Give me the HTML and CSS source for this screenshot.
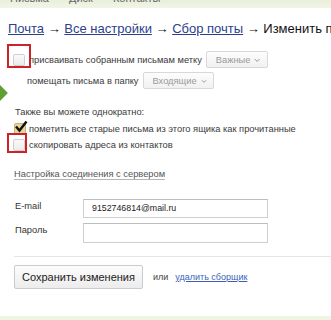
FILE: index.html
```html
<!DOCTYPE html>
<html lang="ru">
<head>
<meta charset="utf-8">
<link rel="stylesheet" href="styles.css">
</head>
<body>
<div class="page">
  <div class="topbar">
    <span>Письма</span><span>Диск</span><span>Контакты</span>
  </div>

  <div class="crumbs">
    <a href="#">Почта</a> → <a href="#">Все настройки</a> → <a href="#">Сбор почты</a> → Изменить параметры сборщика
  </div>

  <div class="opts">
    <div class="row row1">
      <span class="cb"></span>
      <span class="txt">присваивать собранным письмам метку</span>
      <span class="sel sel1">Важные <svg width="7" height="5" viewBox="0 0 7 5"><path d="M1 1 L3.5 3.5 L6 1" fill="none" stroke="#888" stroke-width="1"/></svg></span>
    </div>
    <div class="row row2">
      <span class="txt">помещать письма в папку</span>
      <span class="sel sel2">Входящие <svg width="7" height="5" viewBox="0 0 7 5"><path d="M1 1 L3.5 3.5 L6 1" fill="none" stroke="#888" stroke-width="1"/></svg></span>
    </div>

    <div class="note">Также вы можете однократно:</div>
    <div class="row row3">
      <span class="cb checked"><svg width="14" height="13" viewBox="0 0 14 13"><path d="M2 6.5 L5.5 10.5 L12.5 1.5" fill="none" stroke="#111" stroke-width="2.4"/></svg></span>
      <span class="txt">пометить все старые письма из этого ящика как прочитанные</span>
    </div>
    <div class="row row4">
      <span class="cb"></span>
      <span class="txt">скопировать адреса из контактов</span>
    </div>

    <div class="server"><span>Настройка соединения с сервером</span></div>

    <div class="form">
      <label class="lbl l1">E-mail</label>
      <div class="inp i1">9152746814@mail.ru</div>
      <label class="lbl l2">Пароль</label>
      <div class="inp i2"></div>
    </div>

    <div class="sep"></div>

    <div class="actions">
      <span class="btn">Сохранить изменения</span>
      <span class="or">или</span>
      <a class="del" href="#">удалить сборщик</a>
    </div>
  </div>

  <div class="bottombar"></div>

  <div class="arrow"></div>
  <div class="mark m1"></div>
  <div class="mark m2"></div>
</div>
</body>
</html>
```

FILE: styles.css
```css
html, body {
  margin: 0;
  padding: 0;
  background: #fff;
}
body {
  font-family: "Liberation Sans", Arial, sans-serif;
  color: #333;
  font-size: 9.3px;
  width: 331px;
  height: 320px;
  overflow: hidden;
}
.page {
  position: relative;
  width: 331px;
  height: 320px;
  overflow: hidden;
}
.topbar {
  height: 8px;
  background: linear-gradient(#e9efda, #f1f5e8);
  overflow: hidden;
  font-size: 11px;
  color: #666;
  line-height: 12px;
  display: flex;
  gap: 20px;
  padding-left: 10px;
}
.topbar span {
  margin-top: -8px;
}
.crumbs {
  margin-top: 13px;
  padding-left: 8px;
  font-size: 13px;
  line-height: 16px;
  height: 16px;
  white-space: nowrap;
  overflow: hidden;
  color: #111;
}
.crumbs a {
  color: #2d3f8c;
  text-decoration: underline;
}
.opts {
  padding-left: 13px;
}
.row {
  display: flex;
  align-items: center;
  white-space: nowrap;
}
.txt {
  color: #3a3a3a;
}
.row1 {
  margin-top: 13px;
  height: 19px;
}
.row1 .cb {
  margin-right: 4px;
}
.row2 {
  margin-top: 3px;
  height: 17px;
  padding-left: 14px;
}
.cb {
  width: 10px;
  height: 10px;
  border: 1px solid #cfcfcf;
  border-radius: 2px;
  background: linear-gradient(#fafafa, #ececec);
  flex: none;
  position: relative;
}
.cb.checked {
  background: #e8d49a;
  border-color: #c9b27a;
}
.cb.checked svg {
  position: absolute;
  left: -1px;
  top: -4px;
}
.sel {
  display: inline-flex;
  align-items: center;
  gap: 4px;
  height: 15px;
  padding: 0 6px 0 9px;
  border: 1px solid #d8d8d8;
  border-radius: 2px;
  background: linear-gradient(#fdfdfd, #f1f1f1);
  color: #9a9a9a;
  margin-left: 4px;
}
.sel svg {
  margin-top: 2px;
}
.sel1 {
  width: 45px;
}
.sel2 {
  width: 54px;
}
.note {
  margin-top: 16px;
  padding-left: 2px;
  height: 14px;
  line-height: 14px;
  color: #3a3a3a;
}
.row3 {
  margin-top: 3px;
  height: 14px;
  padding-left: 1px;
}
.row3 .cb {
  margin-right: 3px;
}
.row4 {
  margin-top: 2px;
  height: 14px;
}
.row4 .cb {
  margin-right: 4px;
}
.server {
  margin-top: 15px;
  height: 14px;
  line-height: 14px;
  padding-left: 1px;
  color: #555;
}
.server span {
  border-bottom: 1px solid #b5b5b5;
}
.form {
  margin-top: 18px;
  display: grid;
  grid-template-columns: 68px 185px;
  row-gap: 5px;
  padding-left: 2px;
}
.lbl {
  color: #333;
  line-height: 12px;
}
.l1 {
  padding-top: 1px;
}
.l2 {
  padding-top: 1px;
}
.inp {
  box-sizing: border-box;
  border: 1px solid #cfcfcf;
  border-top-color: #bdbdbd;
  background: #fff;
  padding-left: 8px;
  line-height: 17px;
  color: #222;
  font-size: 8.8px;
}
.i1 {
  height: 19px;
}
.i2 {
  height: 20px;
}
.sep {
  margin-top: 13px;
  margin-left: 1px;
  height: 1px;
  background: #e6e6e6;
}
.actions {
  margin-top: 8px;
  padding-left: 1px;
  display: flex;
  align-items: center;
}
.btn {
  box-sizing: border-box;
  width: 129px;
  height: 24px;
  border: 1px solid #cbcbcb;
  border-radius: 2px;
  background: linear-gradient(#fdfdfd, #ececec);
  font-size: 11px;
  color: #222;
  display: flex;
  align-items: center;
  justify-content: center;
}
.or {
  margin-left: 10px;
  color: #444;
  font-size: 9px;
}
.del {
  margin-left: 7px;
  font-size: 9px;
  color: #3c5fb8;
  text-decoration: underline;
}
.bottombar {
  position: absolute;
  left: 0;
  right: 0;
  bottom: 0;
  height: 4px;
  background: #eef5e2;
}
.arrow {
  position: absolute;
  left: -9px;
  top: 86px;
  width: 14px;
  height: 14px;
  background: #5f9e35;
  transform: rotate(45deg);
}
.mark {
  position: absolute;
  box-sizing: border-box;
  border: 2px solid #cc2229;
}
.m1 {
  left: 7px;
  top: 44px;
  width: 24px;
  height: 24px;
}
.m2 {
  left: 7px;
  top: 133px;
  width: 20px;
  height: 20px;
}
```
